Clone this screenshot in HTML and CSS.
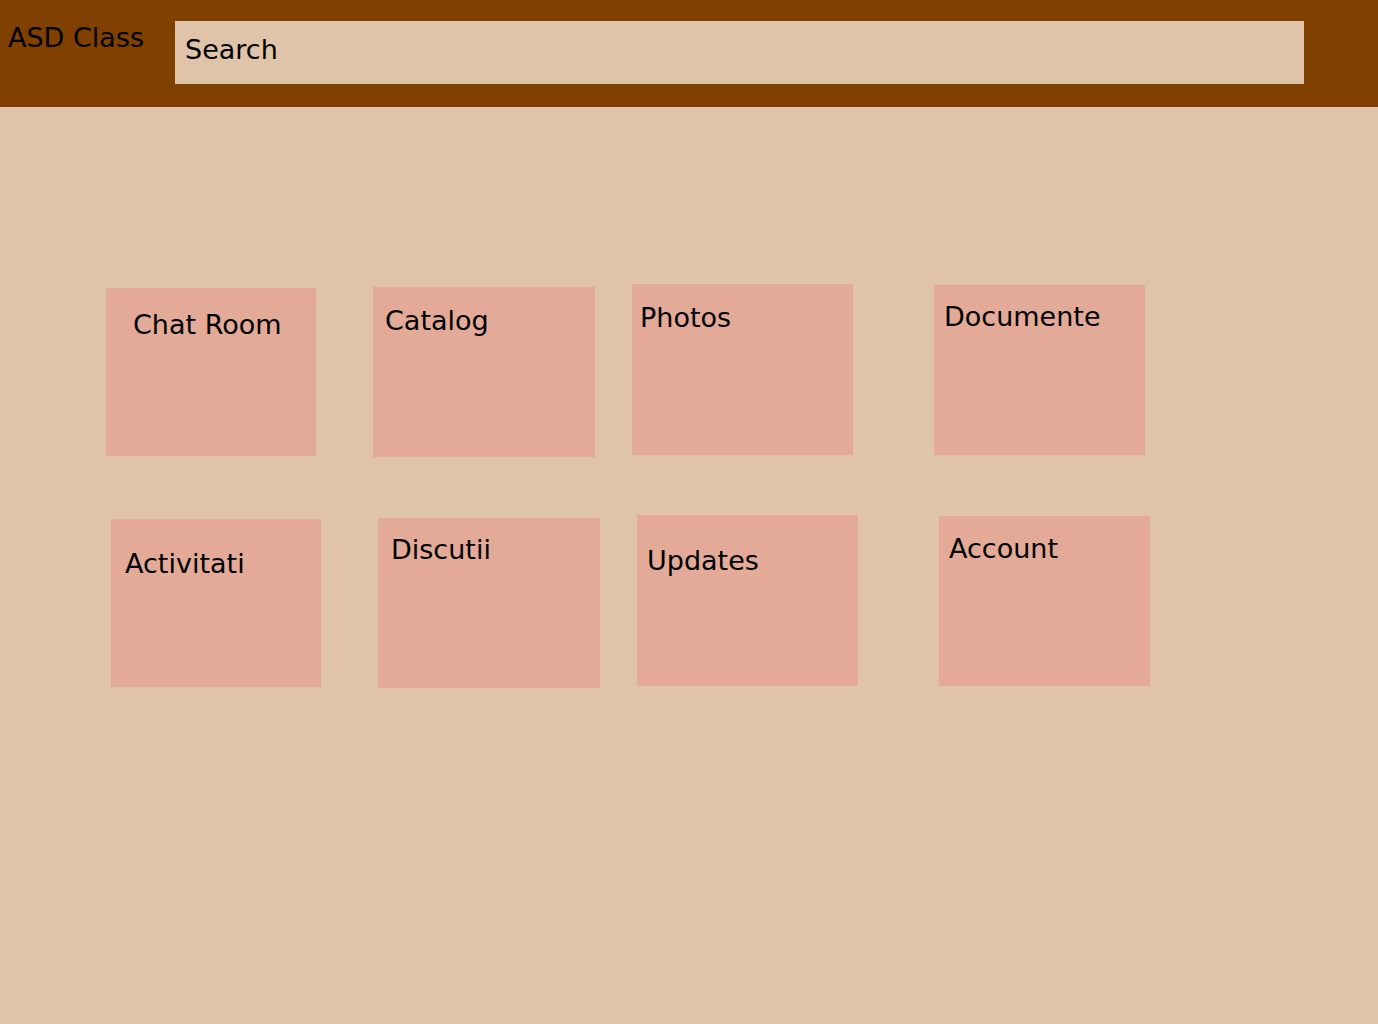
FILE: index.html
```html
<!DOCTYPE html>
<html lang="ro">
<head>
<meta charset="utf-8">
<title>ASD Class</title>
<link rel="stylesheet" href="styles.css">
</head>
<body>
<header class="topbar">
  <div class="brand">ASD Class</div>
  <div class="search">Search</div>
</header>
<main class="board">
  <div class="row">
    <div class="card col-1 t-chat">Chat Room</div>
    <div class="card col-2 t-catalog">Catalog</div>
    <div class="card col-3 t-photos">Photos</div>
    <div class="card col-4 t-docs">Documente</div>
  </div>
  <div class="row row-shift">
    <div class="card col-1 t-act">Activitati</div>
    <div class="card col-2 t-disc">Discutii</div>
    <div class="card col-3 t-upd">Updates</div>
    <div class="card col-4 t-acc">Account</div>
  </div>
</main>
</body>
</html>
```

FILE: styles.css
```css
html, body {
  margin: 0;
  padding: 0;
}
body {
  background: #dfc4a9;
  font-family: "DejaVu Sans", Verdana, sans-serif;
  font-size: 27px;
  color: #000;
  min-height: 1024px;
}
.topbar {
  background: #804000;
  height: 107px;
  box-sizing: border-box;
  display: flex;
  align-items: flex-start;
  padding: 21px 0 0 8px;
}
.brand {
  width: 167px;
  margin-top: 1px;
  line-height: normal;
  white-space: nowrap;
}
.search {
  width: 1129px;
  height: 63px;
  box-sizing: border-box;
  background: #dfc4a9;
  padding: 13px 0 0 10px;
  line-height: normal;
}
.board {
  padding: 177px 0 0 106px;
  display: flex;
  flex-direction: column;
  gap: 58px;
}
.row {
  display: flex;
  align-items: flex-start;
}
.row-shift {
  margin-left: 5px;
}
.card {
  background: #e3aa98;
  box-sizing: border-box;
  line-height: normal;
  white-space: nowrap;
}
.col-1 { width: 210px; height: 168px; margin-top: 4px; }
.col-2 { width: 222px; height: 170px; margin-top: 3px; margin-left: 57px; }
.col-3 { width: 221px; height: 171px; margin-top: 0; margin-left: 37px; }
.col-4 { width: 211px; height: 170px; margin-top: 1px; margin-left: 81px; }

.t-chat    { padding: 21px 0 0 27px; }
.t-catalog { padding: 18px 0 0 12px; }
.t-photos  { padding: 18px 0 0 8px; }
.t-docs    { padding: 16px 0 0 10px; }
.t-act     { padding: 29px 0 0 14px; }
.t-disc    { padding: 16px 0 0 13px; }
.t-upd     { padding: 30px 0 0 10px; }
.t-acc     { padding: 17px 0 0 10px; }
```
